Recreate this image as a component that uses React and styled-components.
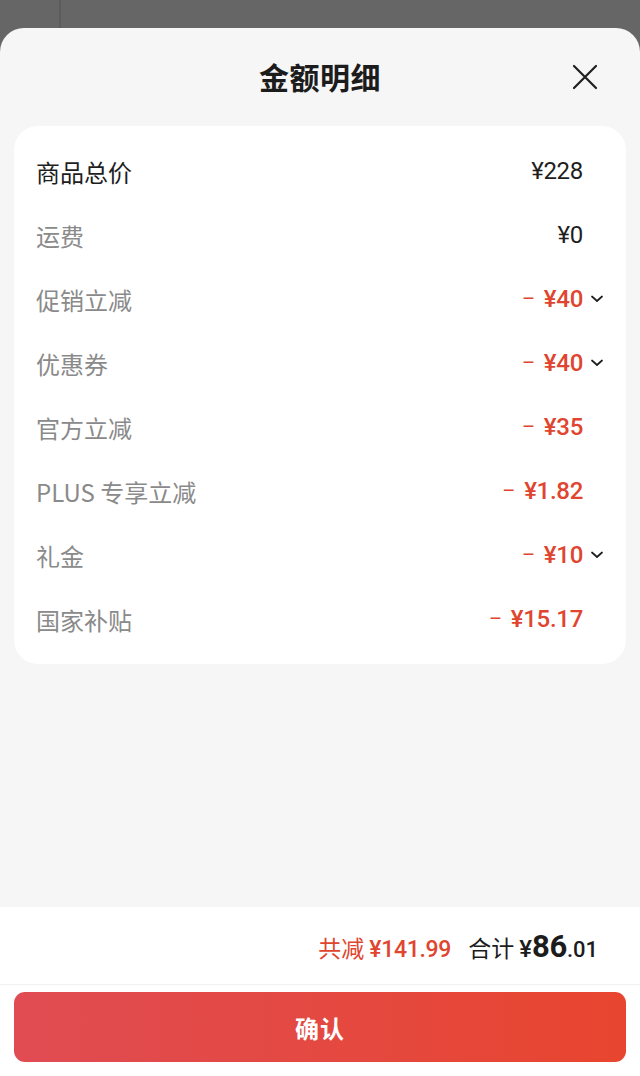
import React from "react";
import styled, { createGlobalStyle } from "styled-components";

const Global = createGlobalStyle`
  html, body { margin: 0; padding: 0; background: #666666; }
  body { font-family: "Noto Sans CJK SC", "Noto Sans", sans-serif; }
  * { box-sizing: border-box; }
`;

const Screen = styled.div`
  width: 640px;
  height: 1076px;
  display: flex;
  flex-direction: column;
  background: #666666;
  overflow: hidden;
`;

const Backdrop = styled.div`
  height: 28px;
  flex: none;
  background: linear-gradient(
    to right,
    #666666 59px,
    #5c5c5c 59px,
    #5c5c5c 61px,
    #666666 61px
  );
`;

const Sheet = styled.div`
  flex: 1;
  display: flex;
  flex-direction: column;
  background: #f6f6f6;
  border-radius: 24px 24px 0 0;
`;

const Header = styled.div`
  height: 98px;
  flex: none;
  display: flex;
  align-items: center;
  justify-content: center;
  position: relative;
  padding-bottom: 2px;
`;

const Title = styled.h1`
  margin: 0;
  font-size: 30px;
  font-weight: 700;
  color: #1c1c1c;
  letter-spacing: 0.5px;
`;

const CloseButton = styled.button`
  position: absolute;
  right: 42px;
  top: 36px;
  width: 26px;
  height: 26px;
  padding: 0;
  border: 0;
  background: transparent;
  display: flex;
  align-items: center;
  justify-content: center;
`;

const Card = styled.div`
  margin: 0 14px;
  background: #ffffff;
  border-radius: 24px;
  padding: 13px 20px 13px 22px;
  display: flex;
  flex-direction: column;
`;

const Row = styled.div`
  height: 64px;
  display: flex;
  align-items: center;
`;

const Label = styled.span`
  flex: 1;
  font-size: 24px;
  color: ${(p) => (p.$strong ? "#1e1e1e" : "#8a8a8a")};
  font-family: "Noto Sans CJK SC", "Noto Sans", sans-serif;
`;

const Value = styled.span`
  display: flex;
  align-items: center;
  font-family: Roboto, "Noto Sans", sans-serif;
  font-size: 24px;
  font-weight: ${(p) => (p.$red ? 500 : 400)};
  color: ${(p) => (p.$red ? "#df452f" : "#1e1e1e")};
  letter-spacing: -0.3px;
`;

const Minus = styled.span`
  font-weight: 400;
  font-size: 20px;
  margin-right: 9px;
`;

const ChevronSlot = styled.span`
  width: 18px;
  margin-left: 5px;
  display: flex;
  align-items: center;
  justify-content: center;
`;

const Spacer = styled.div`
  flex: 1;
`;

const Footer = styled.div`
  height: 169px;
  flex: none;
  background: #ffffff;
  display: flex;
  flex-direction: column;
`;

const Summary = styled.div`
  height: 78px;
  display: flex;
  align-items: center;
  justify-content: flex-end;
  padding: 2px 42px 0 0;
  border-bottom: 1px solid #f1f1f1;
`;

const Saved = styled.span`
  color: #df452f;
  font-size: 23px;
  margin-right: 17px;
  display: flex;
  align-items: baseline;
`;

const SavedAmount = styled.span`
  font-family: Roboto, "Noto Sans", sans-serif;
  font-weight: 500;
  font-size: 23px;
  margin-left: 5px;
  letter-spacing: -0.3px;
`;

const Total = styled.span`
  color: #1c1c1c;
  font-size: 23px;
  display: flex;
  align-items: baseline;
`;

const Yen = styled.span`
  font-family: Roboto, "Noto Sans", sans-serif;
  font-weight: 500;
  font-size: 24px;
  margin-left: 5px;
`;

const Big = styled.span`
  font-family: Roboto, "Noto Sans", sans-serif;
  font-weight: 700;
  font-size: 31px;
  letter-spacing: -0.3px;
`;

const Cents = styled.span`
  font-family: Roboto, "Noto Sans", sans-serif;
  font-weight: 500;
  font-size: 22px;
`;

const ConfirmButton = styled.button`
  margin: 7px 14px 0;
  height: 70px;
  border: 0;
  border-radius: 11px;
  background: linear-gradient(to right, #e04c53, #e8452f);
  color: #ffffff;
  font-family: "Noto Sans CJK SC", "Noto Sans", sans-serif;
  font-size: 24px;
  font-weight: 700;
  letter-spacing: 1px;
`;

const Chevron = () => (
  <svg width="12" height="8" viewBox="0 0 12 8" fill="none">
    <path d="M1 1.5 L6 6 L11 1.5" stroke="#1e1e1e" strokeWidth="1.7" strokeLinecap="round" strokeLinejoin="round" />
  </svg>
);

const CloseIcon = () => (
  <svg width="26" height="26" viewBox="0 0 26 26" fill="none">
    <path d="M2 2 L24 24 M24 2 L2 24" stroke="#1f1f1f" strokeWidth="2.2" strokeLinecap="round" />
  </svg>
);

const rows = [
  { label: "商品总价", value: "¥228", strong: true },
  { label: "运费", value: "¥0" },
  { label: "促销立减", value: "¥40", red: true, chevron: true },
  { label: "优惠券", value: "¥40", red: true, chevron: true },
  { label: "官方立减", value: "¥35", red: true },
  { label: "PLUS 专享立减", value: "¥1.82", red: true },
  { label: "礼金", value: "¥10", red: true, chevron: true },
  { label: "国家补贴", value: "¥15.17", red: true },
];

export default function App() {
  return (
    <Screen>
      <Global />
      <Backdrop />
      <Sheet>
        <Header>
          <Title>金额明细</Title>
          <CloseButton aria-label="关闭">
            <CloseIcon />
          </CloseButton>
        </Header>
        <Card>
          {rows.map((r) => (
            <Row key={r.label}>
              <Label $strong={r.strong}>{r.label}</Label>
              <Value $red={r.red}>
                {r.red && <Minus>–</Minus>}
                {r.value}
              </Value>
              <ChevronSlot>{r.chevron && <Chevron />}</ChevronSlot>
            </Row>
          ))}
        </Card>
        <Spacer />
        <Footer>
          <Summary>
            <Saved>
              共减<SavedAmount>¥141.99</SavedAmount>
            </Saved>
            <Total>
              合计<Yen>¥</Yen>
              <Big>86</Big>
              <Cents>.01</Cents>
            </Total>
          </Summary>
          <ConfirmButton>确认</ConfirmButton>
        </Footer>
      </Sheet>
    </Screen>
  );
}
